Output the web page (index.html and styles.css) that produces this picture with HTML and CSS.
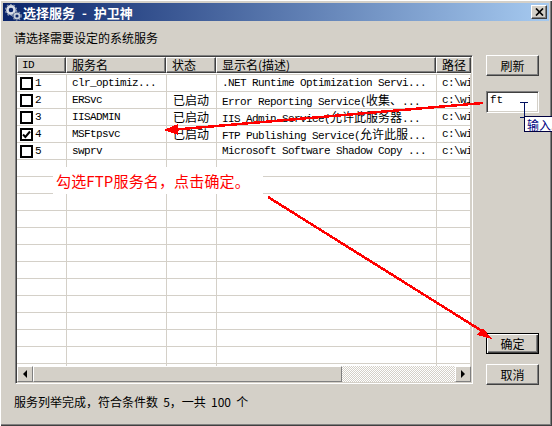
FILE: index.html
```html
<!DOCTYPE html>
<html lang="zh">
<head>
<meta charset="utf-8">
<title>选择服务 - 护卫神</title>
<link rel="stylesheet" href="styles.css">
</head>
<body>
<div class="window">
  <div class="titlebar">
    <svg class="gears" width="17" height="17" viewBox="0 0 17 17">
      <circle cx="6" cy="6" r="3.6" fill="none" stroke="#d8dde8" stroke-width="2.6"/>
      <circle cx="6" cy="6" r="5.4" fill="none" stroke="#8a97b0" stroke-width="1.4" stroke-dasharray="1.8 1.6"/>
      <circle cx="12" cy="12" r="2.6" fill="none" stroke="#c4ccd8" stroke-width="2"/>
      <circle cx="12" cy="12" r="4.2" fill="none" stroke="#7f8ca6" stroke-width="1.2" stroke-dasharray="1.6 1.4"/>
    </svg>
    <span class="title">选择服务 - 护卫神</span>
    <button class="close" type="button" aria-label="关闭">
      <svg width="9" height="8" viewBox="0 0 9 8"><path d="M1 0.5 8 7.5M8 0.5 1 7.5" stroke="#000" stroke-width="1.7" fill="none"/></svg>
    </button>
  </div>
  <div class="body">
    <p class="prompt">请选择需要设定的系统服务</p>
    <div class="main">
      <div class="list">
        <div class="grid">
          <div class="row head">
            <div class="c c1">ID</div>
            <div class="c c2 zh">服务名</div>
            <div class="c c3 zh">状态</div>
            <div class="c c4 zh">显示名(描述)</div>
            <div class="c c5 zh">路径</div>
          </div>
          <div class="rows">
            <div class="row"><div class="c c1"><span class="check"></span>1</div><div class="c c2">clr_optimiz...</div><div class="c c3"></div><div class="c c4">.NET Runtime Optimization Servi...</div><div class="c c5">c:\wi</div></div>
            <div class="row"><div class="c c1"><span class="check"></span>2</div><div class="c c2">ERSvc</div><div class="c c3 zh">已启动</div><div class="c c4">Error Reporting Service(<span class="zh">收集、</span>...</div><div class="c c5">c:\wi</div></div>
            <div class="row"><div class="c c1"><span class="check"></span>3</div><div class="c c2">IISADMIN</div><div class="c c3 zh">已启动</div><div class="c c4">IIS Admin Service(<span class="zh">允许此服务器</span>...</div><div class="c c5">c:\wi</div></div>
            <div class="row"><div class="c c1"><span class="check on"><svg width="9" height="9" viewBox="0 0 9 9"><path d="M1 4.5 3.4 7 8 1.5" stroke="#000" stroke-width="2" fill="none"/></svg></span>4</div><div class="c c2">MSFtpsvc</div><div class="c c3 zh">已启动</div><div class="c c4">FTP Publishing Service(<span class="zh">允许此服</span>...</div><div class="c c5">c:\wi</div></div>
            <div class="row"><div class="c c1"><span class="check"></span>5</div><div class="c c2">swprv</div><div class="c c3"></div><div class="c c4">Microsoft Software Shadow Copy ...</div><div class="c c5">c:\wi</div></div>
            <div class="row"><div class="c c1"></div><div class="c c2"></div><div class="c c3"></div><div class="c c4"></div><div class="c c5"></div></div>
            <div class="row"><div class="c c1"></div><div class="c c2"></div><div class="c c3"></div><div class="c c4"></div><div class="c c5"></div></div>
            <div class="row"><div class="c c1"></div><div class="c c2"></div><div class="c c3"></div><div class="c c4"></div><div class="c c5"></div></div>
            <div class="row"><div class="c c1"></div><div class="c c2"></div><div class="c c3"></div><div class="c c4"></div><div class="c c5"></div></div>
            <div class="row"><div class="c c1"></div><div class="c c2"></div><div class="c c3"></div><div class="c c4"></div><div class="c c5"></div></div>
            <div class="row"><div class="c c1"></div><div class="c c2"></div><div class="c c3"></div><div class="c c4"></div><div class="c c5"></div></div>
            <div class="row"><div class="c c1"></div><div class="c c2"></div><div class="c c3"></div><div class="c c4"></div><div class="c c5"></div></div>
            <div class="row"><div class="c c1"></div><div class="c c2"></div><div class="c c3"></div><div class="c c4"></div><div class="c c5"></div></div>
            <div class="row"><div class="c c1"></div><div class="c c2"></div><div class="c c3"></div><div class="c c4"></div><div class="c c5"></div></div>
            <div class="row"><div class="c c1"></div><div class="c c2"></div><div class="c c3"></div><div class="c c4"></div><div class="c c5"></div></div>
            <div class="row"><div class="c c1"></div><div class="c c2"></div><div class="c c3"></div><div class="c c4"></div><div class="c c5"></div></div>
            <div class="row"><div class="c c1"></div><div class="c c2"></div><div class="c c3"></div><div class="c c4"></div><div class="c c5"></div></div>
            <div class="row"><div class="c c1"></div><div class="c c2"></div><div class="c c3"></div><div class="c c4"></div><div class="c c5"></div></div>
          </div>
        </div>
        <div class="hscroll">
          <div class="sbtn"><span class="tri left"></span></div>
          <div class="thumb"></div>
          <div class="track"></div>
          <div class="sbtn"><span class="tri right"></span></div>
        </div>
      </div>
      <div class="side">
        <button class="btn" type="button">刷新</button>
        <div class="input">ft</div>
        <div class="spacer"></div>
        <button class="btn default" type="button">确定</button>
        <button class="btn" type="button">取消</button>
      </div>
    </div>
    <p class="status">服务列举完成，符合条件数 5，一共 100 个</p>
  </div>
  <div class="note">勾选FTP服务名，点击确定。</div>
  <svg class="marks" width="552" height="426" viewBox="0 0 552 426">
    <path class="aliased" d="M483 103 176 129.500" stroke="#f00" stroke-width="2.500" fill="none"/>
    <path class="aliased" d="M164 130 178 124 178 135Z" fill="#f00"/>
    <path class="aliased" d="M268 197 482 331" stroke="#f00" stroke-width="2.500" fill="none"/>
    <path class="aliased" d="M492 339 483 328 477 335Z" fill="#f00"/>
    <path class="aliased" d="M520 102.500h8M524 103V118M520 117.500h8" stroke="#001060" fill="none"/>
  </svg>
  <div class="tip">输入...</div>
</div>
</body>
</html>
```
FILE: styles.css
```css
* { box-sizing: border-box; }
html, body { margin: 0; padding: 0; }
body { width: 552px; height: 426px; overflow: hidden; background: #d4d0c8; }
.window {
  position: relative;
  width: 552px;
  height: 426px;
  overflow: hidden;
  padding: 3px 3px 0;
  background: #d4d0c8;
  box-shadow: inset 1px 1px 0 #fff, inset -1px -1px 0 #404040, inset -2px -2px 0 #808080;
  font-family: "Noto Sans CJK SC", sans-serif;
  font-size: 12px;
  color: #000;
}
.titlebar {
  display: flex;
  align-items: center;
  height: 18px;
  padding: 0 2px;
  background: linear-gradient(90deg, #0a246a, #a6caf0);
  color: #fff;
}
.gears { flex: none; margin-right: 1px; }
.title { flex: 1; font-weight: 700; font-size: 13px; word-spacing: 4px; white-space: pre; }
.close {
  flex: none;
  display: flex;
  align-items: center;
  justify-content: center;
  width: 16px;
  height: 14px;
  padding: 0;
  background: #d4d0c8;
  border: 1px solid;
  border-color: #fff #404040 #404040 #fff;
  box-shadow: inset -1px -1px 0 #808080;
}
.body { padding: 0 0 0 11px; }
.prompt { margin: 0; height: 34px; line-height: 34px; white-space: pre; }
.main { display: flex; height: 330px; }
.list {
  flex: none;
  width: 458px;
  height: 329px;
  margin-left: 1px;
  display: flex;
  flex-direction: column;
  background: #fff;
  border: 1px solid;
  border-color: #808080 #fff #fff #808080;
  box-shadow: inset 1px 1px 0 #404040, inset -1px -1px 0 #d4d0c8;
  padding: 1px;
}
.grid { flex: 1; min-height: 0; overflow: hidden; }
.row { display: flex; height: 17px; border-bottom: 1px solid #d4d0c8; }
.c {
  flex: none;
  height: 16px;
  line-height: 16px;
  padding-left: 5px;
  border-right: 1px solid #d4d0c8;
  white-space: nowrap;
  overflow: hidden;
  font-family: "Liberation Mono", "Noto Sans CJK SC", monospace;
  font-size: 11px;
  letter-spacing: -0.6px;
}
.c1 { width: 50px; padding-left: 3px; display: flex; align-items: center; }
.c2 { width: 100px; }
.c3 { width: 50px; padding-left: 6px; }
.c4 { width: 220px; }
.c5 { flex: 1; }
.zh { font-family: "Noto Sans CJK SC", sans-serif; font-size: 12px; letter-spacing: 0; }
.row.head { height: 18px; }
.head .c {
  height: 16px;
  background: #d4d0c8;
  border: 1px solid;
  border-color: #fff #404040 #404040 #fff;
  box-shadow: inset -1px -1px 0 #808080;
  line-height: 14px;
  padding-left: 5px;
}
.head .c1 { width: 49px; padding-left: 4px; }
.check {
  display: flex;
  align-items: center;
  justify-content: center;
  width: 13px;
  height: 13px;
  margin-right: 2px;
  background: #fff;
  border: 2px solid #000;
}
.hscroll { flex: none; display: flex; height: 16px; background: #d4d0c8; }
.sbtn {
  flex: none;
  display: flex;
  align-items: center;
  justify-content: center;
  width: 16px;
  background: #d4d0c8;
  border: 1px solid;
  border-color: #fff #808080 #808080 #fff;
}
.thumb {
  flex: none;
  width: 309px;
  background: #d4d0c8;
  border: 1px solid;
  border-color: #fff #808080 #808080 #fff;
}
.track {
  flex: 1;
  background: repeating-conic-gradient(#d4d0c8 0 25%, #fff 0 50%) 0 0 / 2px 2px;
}
.tri { width: 0; height: 0; border-top: 4px solid transparent; border-bottom: 4px solid transparent; }
.tri.left { border-right: 4px solid #000; }
.tri.right { border-left: 4px solid #000; }
.side { flex: none; width: 53px; margin-left: 13px; display: flex; flex-direction: column; }
.btn {
  flex: none;
  height: 21px;
  padding: 0;
  background: #d4d0c8;
  border: 1px solid;
  border-color: #fff #404040 #404040 #fff;
  box-shadow: inset -1px -1px 0 #808080;
  font-family: "Noto Sans CJK SC", sans-serif;
  font-size: 12px;
  color: #000;
}
.btn.default {
  border: 1px solid #000;
  box-shadow: inset 1px 1px 0 #fff, inset -1px -1px 0 #404040, inset -2px -2px 0 #808080;
}
.input {
  flex: none;
  height: 22px;
  margin-top: 15px;
  padding-left: 3px;
  line-height: 15px;
  background: #fff;
  border: 1px solid;
  border-color: #808080 #fff #fff #808080;
  box-shadow: inset 1px 1px 0 #404040, inset -1px -1px 0 #d4d0c8;
  font-family: "Liberation Mono", monospace;
  font-size: 11px;
  padding-top: 1px;
}
.spacer { flex: 1; }
.btn.default + .btn { margin-top: 10px; }
.status { margin: 0; height: 34px; line-height: 34px; word-spacing: 2.5px; white-space: pre; }
.note {
  position: absolute;
  left: 53px;
  top: 167px;
  width: 210px;
  height: 27px;
  padding-left: 3px;
  line-height: 27px;
  background: #fff;
  color: #f00;
  font-size: 15px;
  letter-spacing: 0.15px;
  white-space: nowrap;
}
.marks { position: absolute; left: 0; top: 0; pointer-events: none; }
.aliased { shape-rendering: crispEdges; }
.tip {
  position: absolute;
  left: 524px;
  top: 116px;
  width: 40px;
  height: 16px;
  padding-left: 2px;
  line-height: 15px;
  background: #fff;
  border: 1px solid #000040;
  color: #000080;
  font-size: 12px;
  white-space: nowrap;
}
```
